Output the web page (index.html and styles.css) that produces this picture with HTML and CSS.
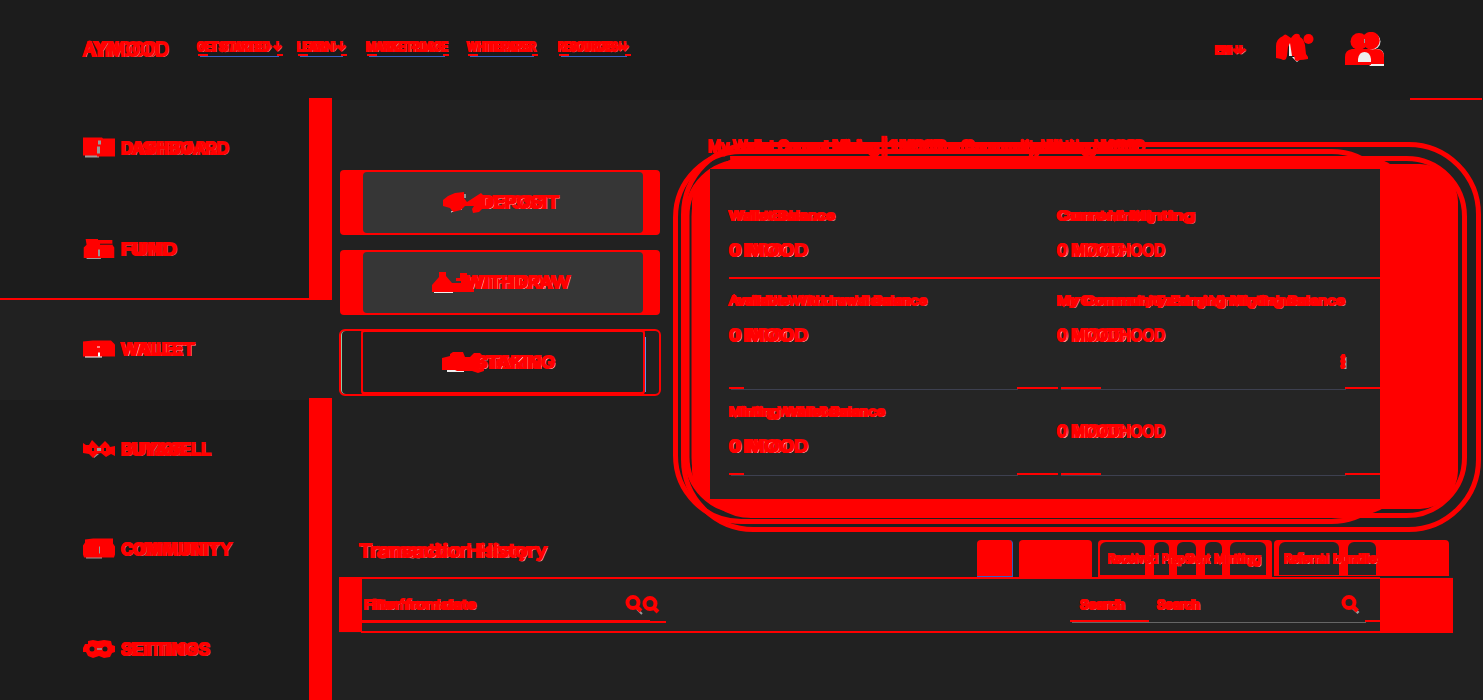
FILE: index.html
```html
<!DOCTYPE html>
<html lang="en"><head><meta charset="utf-8"><title>Wallet</title>
<link rel="stylesheet" href="styles.css"></head>
<body>
<header class="header">
  <div class="logo"><span class="dup" data-w="74 86">AYMOOD</span></div>
  <nav class="nav">
    <a class="get"><span class="dup" data-w="75 85">GET STARTED ↓</span></a>
    <a class="learn"><span class="dup" data-w="41 49">LEARN ↓</span></a>
    <a class="market"><span class="dup" data-w="75 82">MARKETPLACE</span></a>
    <a class="white"><span class="dup" data-w="64 69">WHITEPAPER</span></a>
    <a class="res"><span class="dup" data-w="66 71">RESOURCES ↓</span></a>
  </nav>
  <div class="lang"><span class="dup" data-w="26 31">EN ↓</span></div>
  <svg class="bell" width="40" height="32" viewBox="0 0 40 32"><path fill="#eee" d="M14 10h5v15h-5zM17 26h14v2h-6l-3 3z"/><path fill="red" d="M1 27V15q0-7 7-10 2-3 5 0l3 2q2-3 4-4 5-1 5 3 4 2 5 8l1 9 2 3v2q-5 1-8 1-3 2-5 0l-1-4h-2l-2-13-2 4-1 9-1 3q-2 2-5 0z"/><circle cx="33.500" cy="8" r="5" fill="red"/></svg>
  <svg class="user" width="42" height="36" viewBox="0 0 42 36"><path fill="#eee" d="M12 17h21q6 1 6 7v10H25z"/><path fill="red" d="M0 33V25q0-7 7-8h24q8 0 8 8v7H26v1z"/><path fill="#eee" d="M13 30v-3q1-7 6.500-7t6.500 7v3z"/><circle cx="27.500" cy="9.500" r="8" fill="#ddd"/><circle cx="14" cy="9.500" r="8.500" fill="red"/><circle cx="26" cy="8.500" r="8.700" fill="red"/><path d="M19.500 7v4" stroke="#999"/></svg>
  <i class="header-line"></i>
</header>
<div class="page">
  <aside class="side">
    <div class="menu">
      <a class="item first"><svg class="ic" viewBox="0 0 32 20"><path fill="#999" d="M2 17h14v3H2z"/><path fill="red" d="M0 0h19l1 1h12v18H14v-1H0z"/><path fill="#999" d="M15 3h3v4h-3zM14 9h3v7h-3z"/></svg><span class="dup" data-w="96 108">DASHBOARD</span></a>
      <a class="item fund"><svg class="ic" viewBox="0 0 32 22"><path fill="#999" d="M3 20h15v2H3z"/><path fill="red" d="M2 1h13v1h15v5l2 3v11H0V10l3-3z"/><path fill="#1c1c1c" d="M17 6h13v1H17z"/><path fill="#999" d="M15 12h2v7h-2z"/></svg><span class="dup" data-w="46 56">FUND</span></a>
      <a class="item active"><svg class="ic low" viewBox="0 0 32 17"><path fill="#fff" d="M2 14h17v3H2z"/><path fill="red" d="M0 1l10-1h18l4 4v12H0z"/><path fill="#fff" d="M14 6h3v1h-3zM15 12h2v4h-2z"/></svg><span class="dup" data-w="64 74">WALLET</span></a>
      <a class="item"><svg class="ic low" viewBox="0 0 32 18"><path fill="#999" d="M9 14h7l-5 4z"/><path fill="red" d="M0 3l3 2h3l3-5 4 4 3 3 6-6 4 4 1 2 5-1v10l-4-2-5 3-5-4-4 1-4 4-4-4-6-1z"/><path fill="#1c1c1c" d="M9 8h2v3H9zM21 8h2v3h-2z"/><path fill="#999" d="M14 8h4v3h-4z"/></svg><span class="dup" data-w="79 90">BUY&amp;SELL</span></a>
      <a class="item"><svg class="ic" viewBox="0 0 32 20"><path fill="#999" d="M3 18h16v2H3z"/><path fill="red" d="M2 1l8-1h20v5l2 3v8l-1 3H1L0 16V7l2-3z"/><path fill="#999" d="M16 8h1v7h-1z"/></svg><span class="dup" data-w="98 111">COMMUNITY</span></a>
      <a class="item"><svg class="ic low" viewBox="0 0 32 18"><path fill="red" d="M2 4h3V1l5-1 5 1 6-1 7 1 1 4 3 1v6l-3 1-2 4-6 1-5-2-6 2-5-2-2-4H0V8z"/><circle cx="9" cy="9" r="2.500" fill="#1c1c1c"/><circle cx="22" cy="9" r="2.500" fill="#1c1c1c"/><path d="M14 9h5" stroke="#999" stroke-width="1.500"/></svg><span class="dup" data-w="77 89">SETTINGS</span></a>
    </div>
    <div class="bars"><i class="bar-a"></i><i class="bar-b"></i></div>
  </aside>
  <main class="main">
    <div class="top">
      <div class="buttons">
        <button class="btn"><span class="face"><svg width="46" height="21" viewBox="0 0 46 21"><path stroke="#eee" d="M22 2v4M8 20l3-1M18 18l1-3"/><path fill="red" d="M0 8l5-4 7-3 9-1v6l3 4 14-9 3 3h5v9l-6 3-4 4-6 1-1-4 2-3h-9l-4 4-8 2-3-4-7-2z"/></svg><span class="dup" data-w="66 78">DEPOSIT</span></span></button>
        <button class="btn"><span class="face shift"><svg width="42" height="21" viewBox="0 0 42 21"><path fill="#eee" d="M2 18h19v3H2z"/><path fill="red" d="M7 0h7v4l6 7h9V9h-5V6h4V1h7v4h7v15H0v-7l7-8z"/></svg><span class="dup" data-w="88 104">WITHDRAW</span></span></button>
        <button class="btn outline"><i class="right-frame"></i><span class="face"><svg width="42" height="21" viewBox="0 0 42 21"><path fill="#eee" d="M5 16h17v4H5z"/><path fill="red" d="M0 6l8-2V2l3-2h10l2 5h5l4-4h6l4 4v14l-6 2-6-2H15l-2-1H0z"/></svg><span class="dup" data-w="66 79">STAKING</span></span></button>
      </div>
      <section class="card">
        <svg class="rings" width="810" height="392" viewBox="673 141 810 392" fill="none" stroke="red" stroke-width="5">
          <rect x="692" y="164" width="766" height="345" rx="38" fill="red" stroke="none"/>
          <path d="M730 156h610q40 0 50 8v338q-10 14-50 16H750z" fill="red" stroke="none"/>
          <path d="M745 154.500h238M735 518.500h602" stroke="#212121" stroke-width="1"/>
          <rect x="675.500" y="151.500" width="722" height="370" rx="66"/>
          <rect x="687" y="162" width="697" height="349" rx="54"/>
          <rect x="683.500" y="144.500" width="795" height="385" rx="70"/>
          <rect x="694" y="158.500" width="770.500" height="357" rx="58"/>
        </svg>
        <h2 class="card-title"><span class="dup" data-w="430 437">My Wallet Current Mining | 1 MOOD = Community Minting MOOD</span></h2>
        <div class="grid">
          <div class="cell full"><span class="dup label" data-w="95 106">Wallet Balance</span><span class="dup value" data-w="65 79">0 MOOD</span></div>
          <div class="cell full second"><span class="dup label" data-w="98 138">Current Minting</span><span class="dup value" data-w="69 108" data-first="0 MOOD">0 MOODHOOD</span></div>
          <div class="cell"><span class="dup label" data-w="182 198">Available Withdrawal Balance</span><span class="dup value" data-w="65 79">0 MOOD</span><i class="rule"></i></div>
          <div class="cell second"><span class="dup label" data-w="253 288">My Community Earning Minting Balance</span><span class="dup value" data-w="69 108" data-first="0 MOOD">0 MOODHOOD</span><svg class="dots" width="8" height="16" viewBox="0 0 8 16"><path fill="#aaa" d="M4 3h2.500v12H4z"/><path fill="red" d="M2 0h3l1 3-1 2 1 3-1 2 1 3-2 2H1l-1-3 1-2-1-3 1-2-1-2z"/></svg><i class="rule"></i></div>
          <div class="cell"><span class="dup label" data-w="139 156">Minting Wallet Balance</span><span class="dup value" data-w="65 79">0 MOOD</span><i class="rule"></i></div>
          <div class="cell second single"><span class="dup value" data-w="69 108" data-first="0 MOOD">0 MOODHOOD</span><i class="rule"></i></div>
        </div>
      </section>
    </div>
    <div class="history">
      <h2><span class="dup" data-w="170 188">Transaction History</span></h2>
      <div class="tabs">
        <i class="tab all"></i><i class="tab sent"></i>
        <div class="tab many"><i></i><i></i><i></i><i></i><i></i><div class="words"><span class="dup" data-w="42 50">Received</span><span class="dup" data-w="42 48">Prep Sent</span><span class="dup" data-w="40 47">Minting</span></div></div>
        <div class="tab last"><i></i><i></i><div class="words"><span class="dup" data-w="39 45">Referral</span><span class="dup" data-w="38 44">bundle</span></div></div>
      </div>
    </div>
    <div class="filters">
      <div class="field"><span class="dup" data-w="96 112">Filter from date</span>
        <svg width="35" height="20" viewBox="0 0 35 20"><path d="M12 14l5 5" stroke="#999" stroke-width="2"/><g fill="none" stroke="red" stroke-width="4"><circle cx="8" cy="7.500" r="5.500"/><path d="M11 11l5 5"/><circle cx="25" cy="8.500" r="5.500"/><path d="M28 12l5 5"/></g></svg></div>
      <div class="field search"><span class="dup" data-w="42 45">Search</span><span class="dup" data-w="41 43">Search</span>
        <svg width="19" height="20" viewBox="0 0 19 20"><path d="M12 13l5.500 5" stroke="#999" stroke-width="3"/><g fill="none" stroke="red" stroke-width="4"><circle cx="8" cy="7.500" r="5.500"/><path d="M11.500 11l5 5"/></g></svg></div>
    </div>
  </main>
</div>
<script src="app.js"></script>
</body></html>
```
FILE: styles.css
```css
*{box-sizing:border-box}
html,body{margin:0;width:1483px;height:700px;overflow:hidden;background:#212121}
body{font-family:Inter,"Open Sans",sans-serif;color:red}
i{display:block;flex:none}
svg{flex:none;display:block}
h2{margin:0;font-weight:400}
.dup{display:inline-grid;flex:none;margin-left:-1px;white-space:nowrap;-webkit-text-stroke:2px red;text-shadow:1px 1px 0 var(--echo,#aaa)}
.dup span{grid-area:1/1;justify-self:start;transform-origin:left center}

.header{height:98px;background:#1c1c1c;display:flex;position:relative}
.logo{width:114px;margin-left:84px;padding-top:41px;font-size:19px;line-height:18px}
.nav{display:flex;width:1018px;height:57px;padding-top:40px;font-size:11.500px;font-weight:500;line-height:15px}
.nav a{height:17px;flex:none;background:linear-gradient(red,red) 0 14px/10px 2px no-repeat,linear-gradient(red,red) 100% 14px/6px 2px no-repeat,linear-gradient(#345fc2,#345fc2) 2px 16px/calc(100% - 6px) 1px no-repeat}
.get{width:85px;margin-right:15px}.learn{width:49px;margin-right:20px}.market{width:82px;margin-right:19px}.white{width:70px;margin-right:21px}.res{width:72px}
.lang{width:59px;padding-top:43px;font-size:10px;font-weight:500;line-height:15px}
.bell{margin-top:31px;width:40px}
.user{margin:32px 0 0 30px}
.header-line{position:absolute;right:1px;bottom:-2px;width:72px;height:2px;background:red;z-index:2}

.page{display:flex;height:602px}
.side{width:332px;display:flex;background:#1c1c1c}
.menu{width:309px}
.item{height:100px;display:flex;padding:0 0 3px 83px;align-items:center;gap:7px;font-size:16px;font-weight:500;--echo:#888}
.first{height:102px}
.fund{border-bottom:2px solid red;padding-bottom:1px}
.active{background:#212121;--echo:#fff}
.ic{width:32px;height:21px}
.ic.low{height:18px}
.bars{width:23px;background:#212121}
.bar-a{height:202px;background:red}
.bar-b{height:302px;margin-top:98px;background:red}

.main{flex:1;min-width:0;border-top:2px solid #1c1c1c;background:#212121;padding-left:7px}
.top{display:flex;height:440px}
.buttons{width:334px;padding:70px 0 0 1px;display:flex;flex-direction:column;gap:15px}
.btn{display:flex;width:320px;height:65px;margin:0;padding:2px 17px 2px 23px;border:0;border-radius:4px;background:red;color:red;font:500 15.500px Inter,sans-serif;--echo:#fff}
.face{display:flex;align-items:center;width:280px;height:61px;padding-left:80px;background:#363636;border-radius:4px}
.face .dup{position:relative;z-index:1;margin-left:-8px}
.shift{padding-left:69px}
.outline{position:relative;width:322px;height:67px;margin:-1px 0 0 -1px;padding:0 14px 0 20px;background:#212121;border:2px solid red;border-radius:6px;box-shadow:inset 1px 0 #8fc9a5}
.outline .face{flex:none;height:66px;margin-top:-2px;width:284px;padding-left:79px;background:#212121;border:2px solid red;border-top-width:3px;border-bottom-width:3px}
.right-frame{position:absolute;right:13px;top:6px;width:1px;height:55px;background:#5d91e8;z-index:1}

.card{position:relative;width:810px;padding:69px 103px 0 37px}
.rings{position:absolute;left:0;top:41px}
.card-title{position:absolute;left:36px;top:36px;font-size:16px;font-weight:400;line-height:20px;--echo:red}
.grid{position:relative;display:grid;grid-template:110px 111px 109px/348px 322px;width:670px;background:#252525;font-size:11.500px}
.cell{position:relative;padding-left:20px;display:flex;flex-direction:column}
.second{padding-left:0}
.label{line-height:16px;margin-top:14px}
.full .label{margin-top:39px}
.full{background:linear-gradient(red,red) 19px 108px/100% 2px no-repeat}
.full.second{background-position:0 108px}
.value{font-size:15.500px;font-weight:500;line-height:18px;margin-top:18px;--echo:#fff}
.single .value{margin-top:33px}
.rule{position:absolute;left:19px;right:0;bottom:0;height:3px;background:linear-gradient(red,red) 0 0/15px 2px no-repeat,linear-gradient(red,red) 100% 0/41px 2px no-repeat,linear-gradient(#3d4050,#3d4050) 2px 2px/287px 1px no-repeat}
.second .rule{left:3px;background:linear-gradient(red,red) 0 0/40px 2px no-repeat,linear-gradient(red,red) 100% 0/35px 2px no-repeat,linear-gradient(#3d4050,#3d4050) 0 2px/285px 1px no-repeat}
.cell:nth-child(n+5) .rule{bottom:23px}
.dots{margin:9px 0 0 282px}

.history{height:37px;display:flex;--echo:#ccc}
.history h2{width:638px;padding-left:21px;font-size:17px;line-height:23px}
.tabs{display:flex;height:37px}
.tab{background:red;border-radius:4px 4px 0 0;height:36px}
.all{width:36px;margin-right:6px;height:37px;border-right:1px solid #345fc2;border-bottom:1px solid #345fc2}
.sent{width:73px;margin-right:6px;height:37px}
.many{position:relative;display:flex;width:174px;margin-right:2px;padding:2px 0 0 2px;height:37px}
.many>i,.last>i{height:33px;background:#252525;border-radius:6px 6px 0 0;margin-right:8px}
.many>i:nth-child(1){width:45px;margin-right:9px}.many>i:nth-child(2){width:15px}.many>i:nth-child(3){width:19px;margin-right:9px}.many>i:nth-child(4){width:17px}.many>i:nth-child(5){width:36px}
.last{position:relative;display:flex;width:175px;padding:2px 0 0 5px}
.last>i:nth-child(1){width:60px;margin-right:9px}.last>i:nth-child(2){width:28px}
.words{position:absolute;left:11px;top:11px;display:flex;gap:5px;font-size:11.500px;line-height:16px}

.filters{height:56px;width:1114px;padding:20px 73px 0 23px;background:linear-gradient(red,red) 0 0/23px 55px no-repeat,linear-gradient(red,red) 100% 1px/73px 55px no-repeat,linear-gradient(red,red) 0 0/1041px 2px no-repeat,linear-gradient(red,red) 22px 54px/1030px 2px no-repeat,#252525;display:flex;justify-content:space-between;font-size:12px;line-height:15px}
.field{width:304px;height:26px;display:flex;justify-content:space-between;padding:0 6px 0 3px;background:linear-gradient(red,red) 0 23px/288px 2px no-repeat,linear-gradient(red,red) 100% 24px/304px 2px no-repeat}
.field svg{margin-top:-2px}
.search{width:310px;justify-content:flex-start;padding:0 0 0 11px;background:linear-gradient(red,red) 0 23px/79px 2px no-repeat,linear-gradient(red,red) 100% 23px/15px 2px no-repeat,linear-gradient(#666,#666) 2px 25px/294px 1px no-repeat}
.search .dup + .dup{margin-left:32px}
.search svg{margin-left:141px}
```
FILE: app.js
```js
// Each label is layered twice at the two widths listed in data-w.
document.querySelectorAll('.dup').forEach(function (el) {
  var widths = el.dataset.w.split(' ').map(Number);
  var label = el.textContent;
  var first = el.dataset.first || label;
  el.textContent = '';
  el.style.width = Math.max.apply(null, widths) + 'px';
  widths.forEach(function (w, i) {
    var s = document.createElement('span');
    s.textContent = i === 0 ? first : label;
    el.appendChild(s);
    s.style.transform = 'scaleX(' + w / s.getBoundingClientRect().width + ')';
  });
});
```
